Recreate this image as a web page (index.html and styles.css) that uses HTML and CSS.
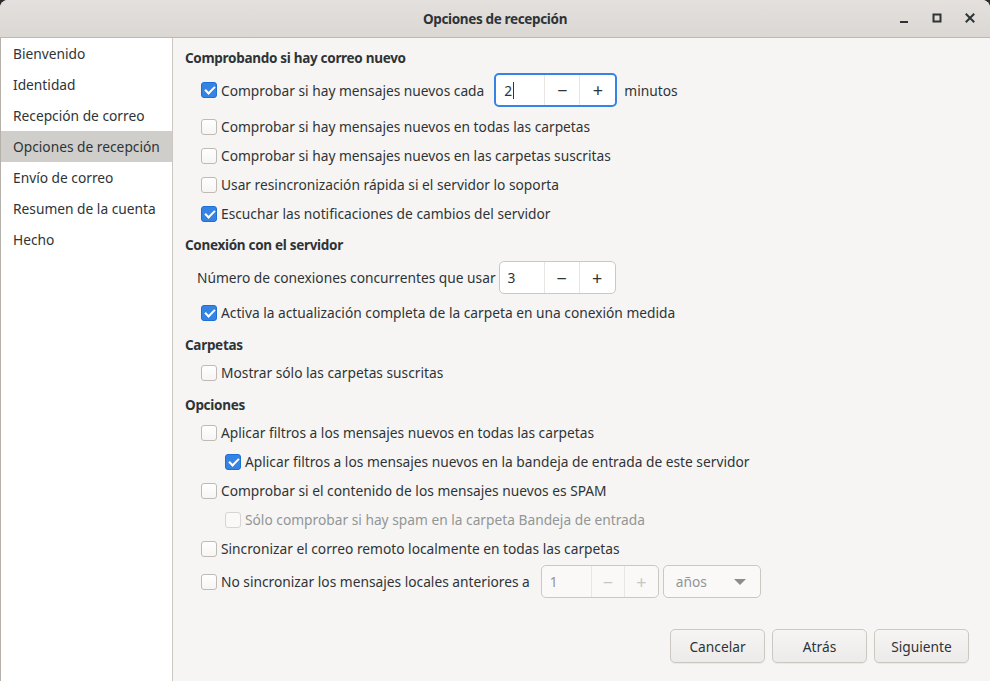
FILE: index.html
```html
<!DOCTYPE html>
<html lang="es">
<head>
<meta charset="utf-8">
<title>Opciones de recepción</title>
<link rel="stylesheet" href="styles.css">
</head>
<body>
<div class="window">
  <header class="titlebar">
    <div class="title">Opciones de recepción</div>
    <div class="controls">
      <span class="ctl"><svg width="16" height="16" viewBox="0 0 16 16"><rect x="4" y="11" width="8" height="2" fill="#2e3436"/></svg></span>
      <span class="ctl"><svg width="16" height="16" viewBox="0 0 16 16"><rect x="4.5" y="4.5" width="7" height="7" fill="none" stroke="#2e3436" stroke-width="2"/></svg></span>
      <span class="ctl"><svg width="16" height="16" viewBox="0 0 16 16"><path d="M4.5 4.5 L11.5 11.5 M11.5 4.5 L4.5 11.5" stroke="#2e3436" stroke-width="2" stroke-linecap="square"/></svg></span>
    </div>
  </header>
  <div class="content">
    <nav class="sidebar">
      <div class="nav-item">Bienvenido</div>
      <div class="nav-item">Identidad</div>
      <div class="nav-item">Recepción de correo</div>
      <div class="nav-item selected">Opciones de recepción</div>
      <div class="nav-item">Envío de correo</div>
      <div class="nav-item">Resumen de la cuenta</div>
      <div class="nav-item">Hecho</div>
    </nav>
    <main class="main">
      <div class="form">
        <h2 class="heading h1">Comprobando si hay correo nuevo</h2>
        <div class="row spinrow first-spin">
          <span class="check checked"></span><span class="label">Comprobar si hay mensajes nuevos cada</span>
          <div class="spin focused"><span class="spin-entry">2<span class="caret"></span></span><span class="spin-btn">−</span><span class="spin-btn">+</span></div>
          <span class="label after">minutos</span>
        </div>
        <div class="row first-after-spin"><span class="check"></span><span class="label">Comprobar si hay mensajes nuevos en todas las carpetas</span></div>
        <div class="row"><span class="check"></span><span class="label">Comprobar si hay mensajes nuevos en las carpetas suscritas</span></div>
        <div class="row"><span class="check"></span><span class="label">Usar resincronización rápida si el servidor lo soporta</span></div>
        <div class="row"><span class="check checked"></span><span class="label">Escuchar las notificaciones de cambios del servidor</span></div>

        <h2 class="heading h2">Conexión con el servidor</h2>
        <div class="row spinrow second-spin">
          <span class="label plain">Número de conexiones concurrentes que usar</span>
          <div class="spin"><span class="spin-entry narrow">3</span><span class="spin-btn">−</span><span class="spin-btn">+</span></div>
        </div>
        <div class="row after-second"><span class="check checked"></span><span class="label">Activa la actualización completa de la carpeta en una conexión medida</span></div>

        <h2 class="heading h3">Carpetas</h2>
        <div class="row after-heading"><span class="check"></span><span class="label">Mostrar sólo las carpetas suscritas</span></div>

        <h2 class="heading h4">Opciones</h2>
        <div class="row after-heading"><span class="check"></span><span class="label">Aplicar filtros a los mensajes nuevos en todas las carpetas</span></div>
        <div class="row indent"><span class="check checked"></span><span class="label">Aplicar filtros a los mensajes nuevos en la bandeja de entrada de este servidor</span></div>
        <div class="row"><span class="check"></span><span class="label">Comprobar si el contenido de los mensajes nuevos es SPAM</span></div>
        <div class="row indent disabled"><span class="check"></span><span class="label">Sólo comprobar si hay spam en la carpeta Bandeja de entrada</span></div>
        <div class="row"><span class="check"></span><span class="label">Sincronizar el correo remoto localmente en todas las carpetas</span></div>
        <div class="row spinrow last-spin">
          <span class="check"></span><span class="label">No sincronizar los mensajes locales anteriores a</span>
          <div class="spin disabled-spin"><span class="spin-entry">1</span><span class="spin-btn small">−</span><span class="spin-btn small">+</span></div>
          <div class="combo"><span>años</span><svg width="12" height="8" viewBox="0 0 12 8"><path d="M0 1 L12 1 L6 7 Z" fill="#8b8e8f"/></svg></div>
        </div>
      </div>
      <div class="actions">
        <button class="btn">Cancelar</button>
        <button class="btn">Atrás</button>
        <button class="btn">Siguiente</button>
      </div>
    </main>
  </div>
</div>
</body>
</html>
```
FILE: styles.css
```css
* { box-sizing: border-box; }
html, body { margin: 0; padding: 0; }
body {
  width: 990px;
  height: 681px;
  overflow: hidden;
  background: #2b2b2b;
  font-family: "Noto Sans", "Open Sans", sans-serif;
  font-size: 13.75px;
  color: #2e3436;
}
.window {
  width: 990px;
  height: 681px;
  display: flex;
  flex-direction: column;
  background: #f6f5f4;
  border-radius: 8px 8px 0 0;
  overflow: hidden;
}
.titlebar {
  height: 38px;
  flex: none;
  position: relative;
  display: flex;
  align-items: center;
  justify-content: center;
  background: linear-gradient(#e3e0dd, #dbd8d4);
  border-bottom: 1px solid #bfb8b1;
}
.title {
  font-weight: bold;
  font-size: 13.5px;
  letter-spacing: -0.35px;
  color: #2e3436;
}
.controls {
  position: absolute;
  right: 12px;
  top: 10px;
  display: flex;
  gap: 17px;
}
.ctl { display: block; width: 16px; height: 16px; }
.ctl svg { display: block; }

.content {
  flex: 1;
  display: flex;
  min-height: 0;
}
.sidebar {
  width: 173px;
  flex: none;
  background: #ffffff;
  border-left: 1px solid #b6b0aa;
  border-right: 1px solid #cdc7c2;
}
.nav-item {
  height: 31px;
  line-height: 31px;
  padding-left: 12px;
  white-space: nowrap;
}
.nav-item.selected { background: #d0cecb; }

.main {
  flex: 1;
  display: flex;
  flex-direction: column;
  padding: 0 21px 18px 12px;
}
.form {
  flex: 1;
  display: flex;
  flex-direction: column;
}
.heading {
  margin: 0;
  font-size: 13.5px;
  letter-spacing: -0.3px;
  font-weight: bold;
  height: 20px;
  line-height: 20px;
}
.h1 { margin-top: 10px; }
.h2 { margin-top: 7px; }
.h3 { margin-top: 8px; }
.h4 { margin-top: 8px; }

.row {
  display: flex;
  align-items: center;
  height: 29px;
  padding-left: 16px;
  white-space: nowrap;
}
.row.indent { padding-left: 40px; }
.row.disabled .label { color: #929595; }
.row.disabled .check { border-color: #d8d4d0; background: #faf9f8; }
.spinrow.first-spin { height: 34px; margin-top: 5px; }
.first-after-spin { margin-top: 5px; }
.spinrow.second-spin { height: 33px; margin-top: 6px; padding-left: 12px; }
.after-second { margin-top: 4px; }
.after-heading { margin-top: 3px; }
.spinrow.last-spin { height: 33px; margin-top: 2px; }

.check {
  width: 16px;
  height: 16px;
  flex: none;
  border: 1px solid #c0bab4;
  border-radius: 3px;
  background: linear-gradient(#ffffff, #f6f5f4);
  margin-right: 4px;
  position: relative;
}
.check.checked {
  background: #3584e4;
  border-color: #1c6fd3;
}
.check.checked::after {
  content: "";
  position: absolute;
  left: 3px;
  top: 3px;
  width: 8px;
  height: 4px;
  border-left: 2.5px solid #fff;
  border-bottom: 2.5px solid #fff;
  transform: rotate(-45deg);
}
.label.plain { margin-right: 1px; }
.label.after { margin-left: 7px; }

.spin {
  display: flex;
  height: 100%;
  border: 1px solid #cdc7c2;
  border-radius: 5px;
  background: #fff;
  margin-left: 10px;
  overflow: hidden;
}
.second-spin .spin { margin-left: 2px; }
.last-spin .spin { margin-left: 11px; }
.spin.focused {
  border: 2px solid #3584e4;
}
.spin-entry {
  width: 49px;
  display: flex;
  align-items: center;
  padding-left: 8px;
  border-right: 1px solid #e8e5e2;
}
.spin-entry.narrow { width: 45px; }
.caret {
  display: inline-block;
  width: 1px;
  height: 17px;
  background: #2e3436;
  margin-left: 1px;
}
.spin-btn {
  width: 35px;
  display: flex;
  align-items: center;
  justify-content: center;
  font-size: 18px;
  color: #2e3436;
  border-right: 1px solid #e8e5e2;
}
.spin-btn:last-child { border-right: none; }
.spin-btn.small { width: 33px; }
.disabled-spin { background: #faf9f8; }
.disabled-spin .spin-entry { width: 50px; color: #929595; }
.disabled-spin .spin-btn { color: #c5c7c7; }
.combo {
  height: 100%;
  width: 98px;
  margin-left: 4px;
  border: 1px solid #cdc7c2;
  border-radius: 5px;
  background: #faf9f8;
  color: #929595;
  display: flex;
  align-items: center;
  justify-content: space-between;
  padding: 0 14px 0 12px;
}
.combo svg { display: block; }

.actions {
  display: flex;
  justify-content: flex-end;
  gap: 7px;
}
.btn {
  width: 95px;
  height: 34px;
  font-family: inherit;
  font-size: 13.75px;
  color: #2e3436;
  border: 1px solid #cdc7c2;
  border-radius: 5px;
  background: linear-gradient(#f6f5f4, #edebe9);
  box-shadow: 0 1px 0 rgba(0,0,0,0.05);
  padding: 0;
}
```
